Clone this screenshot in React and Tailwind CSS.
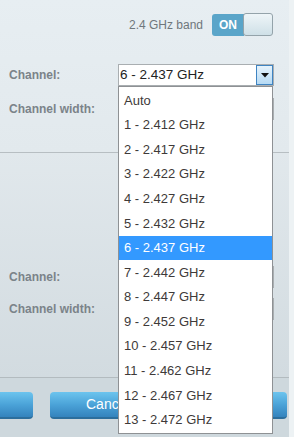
import React from 'react';

const CHANNELS = [
  'Auto',
  '1 - 2.412 GHz',
  '2 - 2.417 GHz',
  '3 - 2.422 GHz',
  '4 - 2.427 GHz',
  '5 - 2.432 GHz',
  '6 - 2.437 GHz',
  '7 - 2.442 GHz',
  '8 - 2.447 GHz',
  '9 - 2.452 GHz',
  '10 - 2.457 GHz',
  '11 - 2.462 GHz',
  '12 - 2.467 GHz',
  '13 - 2.472 GHz',
];

const Label = ({ children }) => (
  <div className="w-[109px] text-[12px] font-bold text-[#7b8389]">{children}</div>
);

// plain select box, mostly hidden behind the open list
const SelectBox = ({ value = '', arrow = false }) => (
  <div className="relative w-[156px] h-[22px] bg-white border border-[#a9aeb1] flex items-center pl-[1px]">
    <span className="text-[13.5px] text-[#222]">{value}</span>
    {arrow && (
      <div className="absolute right-0 top-0 w-[17px] h-[20px] border border-[#3f84c2] bg-gradient-to-b from-[#e6f3fc] to-[#b6daf4] flex items-center justify-center">
        <svg width="8" height="5" viewBox="0 0 8 5">
          <path d="M0 0 H8 L4 4.5 Z" fill="#111" />
        </svg>
      </div>
    )}
  </div>
);

const Row = ({ label, children, className = '' }) => (
  <div className={`flex items-center pl-[9px] ${className}`}>
    <Label>{label}</Label>
    {children}
  </div>
);

const BlueButton = ({ children, className = '' }) => (
  <div
    className={`h-[27px] rounded-[4px] bg-gradient-to-b from-[#6cc4ee] via-[#4ba3d8] to-[#3483bd] border-b-2 border-[#2c6e9c] flex items-center text-white text-[14px] ${className}`}
  >
    {children}
  </div>
);

export default function App() {
  return (
    <div
      className="relative w-[294px] h-[437px] overflow-hidden flex bg-[#edf2f4]"
      style={{ fontFamily: '"Liberation Sans", Arial, sans-serif' }}
    >
      <div className="w-[289px] flex flex-col">
        {/* band section */}
        <div className="h-[152px] bg-gradient-to-b from-[#e7eef2] to-[#e2e9ed] flex flex-col">
          <div className="flex items-center justify-end pr-[16px] pt-[13px] gap-[9px]">
            <span className="text-[12px] text-[#6f777c]">2.4 GHz band</span>
            <div className="flex h-[23px]">
              <div className="w-[32px] h-[22px] mt-[1px] rounded-l-[3px] bg-[#5aa5c9] flex items-center justify-center text-white text-[12px] font-bold">
                ON
              </div>
              <div className="w-[30px] h-[23px] -ml-[1px] rounded-[3px] border border-[#94a3aa] bg-gradient-to-b from-[#eef5f8] to-[#cfe0e7]" />
            </div>
          </div>
          <Row label="Channel:" className="mt-[28px]">
            <SelectBox value="6 - 2.437 GHz" arrow />
          </Row>
          <Row label="Channel width:" className="mt-[12px]">
            <SelectBox />
          </Row>
        </div>
        <div className="h-px bg-[#b7bec2]" />
        {/* second band */}
        <div className="h-[224px] bg-gradient-to-b from-[#e1e8ec] to-[#d2dbe0] flex flex-col">
          <Row label="Channel:" className="mt-[113px]">
            <SelectBox />
          </Row>
          <Row label="Channel width:" className="mt-[10px]">
            <SelectBox />
          </Row>
        </div>
        <div className="h-px bg-[#b3bbbf]" />
        {/* actions */}
        <div className="flex-1 bg-[#ced8dd] flex items-start pt-[14px]">
          <BlueButton className="w-[38px] -ml-[5px]" />
          <BlueButton className="w-[150px] ml-[17px] pl-[36px]">Cancel</BlueButton>
          <BlueButton className="flex-1 ml-[17px]" />
          <div className="w-[2px]" />
        </div>
      </div>

      {/* open channel list */}
      <div className="absolute left-[118px] top-[86px] w-[155px] h-[348px] bg-white border border-[#8e9194] pt-px">
        {CHANNELS.map((c) => (
          <div
            key={c}
            className={`h-[24.6px] flex items-center pl-[5px] text-[13px] ${
              c === '6 - 2.437 GHz' ? 'bg-[#3399ff] text-white' : 'text-[#3e3a39]'
            }`}
          >
            {c}
          </div>
        ))}
      </div>
    </div>
  );
}
